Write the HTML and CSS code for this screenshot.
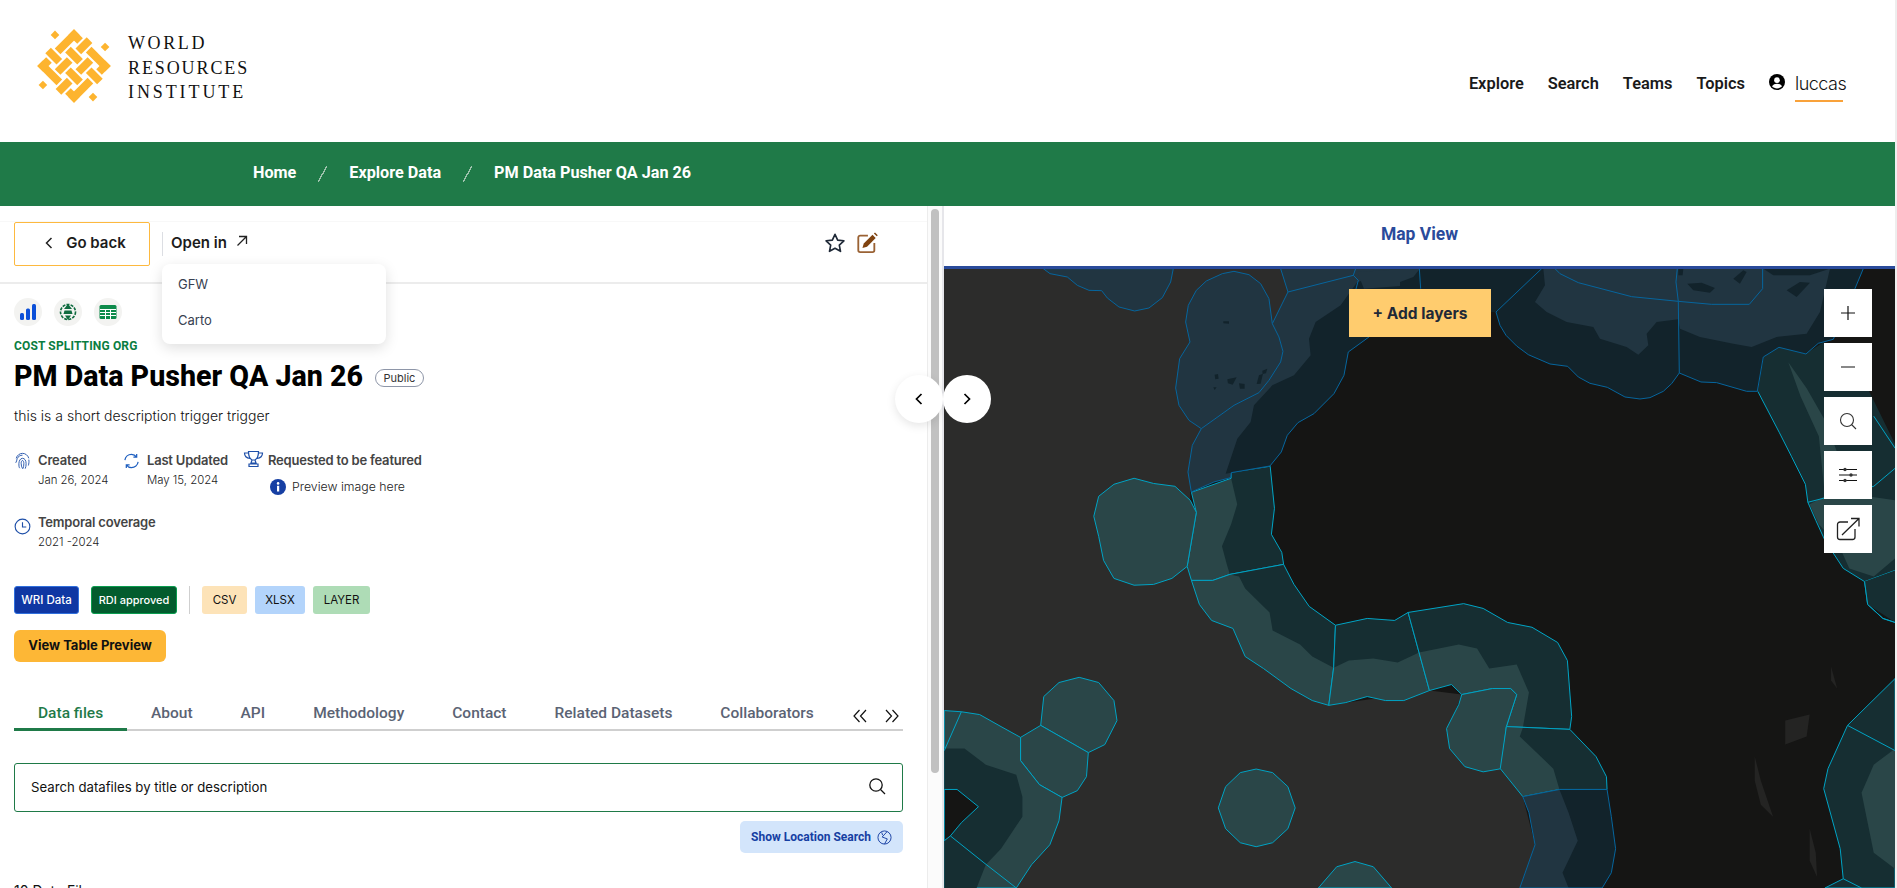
FILE: index.html
```html
<!DOCTYPE html>
<html lang="en">
<head>
<meta charset="utf-8">
<title>PM Data Pusher QA Jan 26</title>
<link rel="stylesheet" href="styles.css">
</head>
<body>
<div class="app">
  <header class="header">
    <a class="brand">
      <svg class="brand-mark" viewBox="-30.300 -30.300 60.600 60.600" aria-hidden="true">
        <g transform="rotate(45)" fill="#fdb42f">
          <rect x="-21.25" y="-21.25" width="10.25" height="6.5"/><rect x="-21.25" y="-21.25" width="6.5" height="22.25"/>
          <rect x="-1" y="-21.25" width="22.25" height="6.5"/><rect x="14.75" y="-21.25" width="6.5" height="10.25"/>
          <rect x="11" y="14.75" width="10.25" height="6.5"/><rect x="14.75" y="-1" width="6.5" height="22.25"/>
          <rect x="-21.25" y="14.75" width="22.25" height="6.5"/><rect x="-21.25" y="11" width="6.5" height="10.25"/>
          <rect x="-13" y="-9.25" width="14" height="6.5"/><rect x="11" y="-9.25" width="13" height="6.5"/>
          <rect x="-24" y="2.75" width="13" height="6.5"/><rect x="-1" y="2.75" width="14" height="6.5"/>
          <rect x="-9.25" y="-24" width="6.5" height="13"/><rect x="-9.25" y="-1" width="6.5" height="14"/>
          <rect x="2.75" y="-13" width="6.5" height="14"/><rect x="2.75" y="11" width="6.5" height="13"/>
          <rect x="-31.5" y="-9.5" width="5" height="5"/><rect x="4.5" y="-31.5" width="5" height="5"/>
          <rect x="-9.5" y="26.5" width="5" height="5"/><rect x="26.5" y="4.5" width="5" height="5"/>
        </g>
      </svg>
      <div class="brand-name"><span>WORLD</span><span class="wide">RESOURCES</span><span class="mid">INSTITUTE</span></div>
    </a>
    <nav class="nav">
      <a>Explore</a><a>Search</a><a>Teams</a><a>Topics</a>
      <div class="user">
        <svg class="user-icon" viewBox="0 0 24 24"><circle cx="12" cy="12" r="12" fill="#000"/><circle cx="12" cy="9.2" r="4.2" fill="#fff"/><path d="M4.5 18.5c1.6-3 4.4-4 7.5-4s5.900 1 7.500 4c-1.900 2-4.500 3.200-7.500 3.200s-5.600-1.200-7.500-3.200z" fill="#fff"/></svg>
        <span class="user-name">luccas</span>
      </div>
    </nav>
  </header>

  <div class="crumbs">
    <a>Home</a><i class="sep"></i><a>Explore Data</a><i class="sep"></i><a>PM Data Pusher QA Jan 26</a>
  </div>

  <main class="split">
    <section class="left">
      <div class="toolbar">
        <button class="back"><svg class="ico10" viewBox="0 0 10 14"><path d="M7.500 2 2.500 7l5 5" fill="none" stroke="#222" stroke-width="1.500"/></svg>Go back</button>
        <i class="tool-sep"></i>
        <div class="open">Open in
          <svg class="ico12" viewBox="0 0 12 12"><path d="M1.500 10.500 10.500 1.500M3 1.500h7.500V9" fill="none" stroke="#222" stroke-width="1.300"/></svg>
        </div>
        <div class="tool-actions">
          <svg class="star" viewBox="0 0 24 24"><path d="M12 2.500l2.900 6.300 6.800.8-5 4.700 1.300 6.800-6-3.400-6 3.400 1.300-6.800-5-4.700 6.800-.8z" fill="none" stroke="#1f2937" stroke-width="1.800" stroke-linejoin="round"/></svg>
          <svg class="edit" viewBox="0 0 24 24"><path d="M13 4H4.500A2 2 0 0 0 2.500 6v14a2 2 0 0 0 2 2H18a2 2 0 0 0 2-2v-8" fill="none" stroke="#9a6234" stroke-width="2"/><path d="M7 17.500l1.500-5L18 3l3.500 3.500-9.500 9.500z" fill="#7f4310"/><path d="M19.500 1.500l1.200-1 3 3-1 1.200z" fill="#7f4310"/></svg>
        </div>
        <div class="menu"><a>GFW</a><a>Carto</a></div>
      </div>

      <div class="content">
        <div class="kinds">
          <span class="kind"><svg viewBox="0 0 18 18"><rect x="1" y="10" width="4" height="7" rx="1.500" fill="#0b4fd8"/><rect x="7" y="5.500" width="4" height="11.500" rx="1.500" fill="#0b4fd8"/><rect x="13" y="1" width="4" height="16" rx="1.500" fill="#0b4fd8"/></svg></span>
          <span class="kind"><svg viewBox="0 0 18 18"><circle cx="9" cy="9" r="7.500" fill="none" stroke="#0f6b3f" stroke-width="1.600" stroke-dasharray="3 1.200"/><path d="M9 1 13 6 5 6zM5.500 7.500h7l1 3.500h-9zM6 12.500h6L9 17z" fill="#0f6b3f"/></svg></span>
          <span class="kind"><svg viewBox="0 0 18 18"><rect x=".5" y="2" width="17" height="14" rx="1.500" fill="#0d8a4a"/><path d="M1 6.500h16M1 9.500h16M1 12.500h16M6.500 6.500V16M11.500 6.500V16" stroke="#fff" stroke-width="1"/></svg></span>
        </div>
        <div class="org">COST SPLITTING ORG</div>
        <div class="title-row"><h1>PM Data Pusher QA Jan 26</h1><span class="pill">Public</span></div>
        <p class="desc">this is a short description trigger trigger</p>

        <div class="meta-row">
          <div class="meta m-created">
            <svg class="meta-ico" viewBox="0 0 18 20" fill="none" stroke="#1e4fa8" stroke-width="1"><path d="M2 7C3 3.500 6 1.500 9 1.500s6 2 7 5.500M1.500 12c1-1 1-3 1.500-4.500C4 5 6.500 3.500 9 3.500M6 18c-1-1-1-3-1-5 0-3 1.500-6 4-6s4 2.500 4 6c0 2-.2 4-1 5.500M9 18.500c-1-2-1.500-3.500-1.500-6 0-1.500.5-3 1.500-3s1.500 1.500 1.500 3.500c0 2-.3 4-1 5.500M15.500 15c.5-2 1-4 .5-6.500"/></svg>
            <div><b>Created</b><span>Jan 26, 2024</span></div>
          </div>
          <div class="meta m-updated">
            <svg class="meta-ico" viewBox="0 0 18 18" fill="none" stroke="#1e5fc0" stroke-width="1.300"><path d="M2 8C2.500 4.500 5.500 2 9 2c2.500 0 4 1 5.500 3M14.500 1.500V5H11M16 10c-.5 3.500-3.500 6-7 6-2.500 0-4-1-5.500-3M3.500 16.500V13H7"/></svg>
            <div><b>Last Updated</b><span>May 15, 2024</span></div>
          </div>
          <div class="meta m-featured">
            <svg class="meta-ico trophy" viewBox="0 0 20 18" fill="none" stroke="#1e4fa8" stroke-width="1.200"><path d="M5 1.500h10c0 4-1 7-3.500 8.500h-3C6 8.500 5 5.500 5 1.500zM5 3H1c0 3 2 5 5.500 5.500M15 3h4c0 3-2 5-5.500 5.500M8.500 10 7.500 13h5l-1-3M5.500 16.500h9V14h-9z"/></svg>
            <div><b>Requested to be featured</b>
              <span class="preview"><svg class="info" viewBox="0 0 16 16"><circle cx="8" cy="8" r="8" fill="#163fa3"/><rect x="7" y="6.800" width="2.200" height="5.700" fill="#fff"/><circle cx="8.100" cy="4.400" r="1.300" fill="#fff"/></svg>Preview image here</span>
            </div>
          </div>
        </div>
        <div class="meta-row second">
          <div class="meta">
            <svg class="meta-ico clock" viewBox="0 0 18 18" fill="none" stroke="#1e4fa8" stroke-width="1.200"><circle cx="9" cy="9" r="7.800"/><path d="M9 4.500V9.500H13"/></svg>
            <div><b>Temporal coverage</b><span>2021 -2024</span></div>
          </div>
        </div>

        <div class="badges">
          <span class="badge wri">WRI Data</span>
          <span class="badge rdi">RDI approved</span>
          <i class="badge-sep"></i>
          <span class="badge csv">CSV</span>
          <span class="badge xlsx">XLSX</span>
          <span class="badge layer">LAYER</span>
        </div>
        <button class="preview-btn">View Table Preview</button>

        <div class="tabs">
          <a class="tab active">Data files</a><a class="tab t-about">About</a><a class="tab">API</a><a class="tab">Methodology</a><a class="tab">Contact</a><a class="tab">Related Datasets</a><a class="tab">Collaborators</a>
          <span class="tab-arrows">
            <svg viewBox="0 0 16 14"><path d="M7.500 1 2 7l5.500 6M14 1 8.500 7l5.500 6" fill="none" stroke="#111" stroke-width="1.200"/></svg>
            <svg viewBox="0 0 16 14"><path d="M2 1l5.500 6L2 13M8.500 1 14 7l-5.500 6" fill="none" stroke="#111" stroke-width="1.200"/></svg>
          </span>
        </div>

        <div class="search">
          <span>Search datafiles by title or description</span>
          <svg class="ico18" viewBox="0 0 18 18"><circle cx="8" cy="8" r="6.200" fill="none" stroke="#111" stroke-width="1.300"/><path d="M12.500 12.500 17 17" stroke="#111" stroke-width="1.300"/></svg>
        </div>
        <div class="loc-row">
          <button class="loc">Show Location Search
            <svg class="ico14" viewBox="0 0 16 16" fill="none" stroke="#163fa3" stroke-width="1"><circle cx="8" cy="8" r="7"/><path d="M10.500 2 5.500 7.500l5.500 2L8 15M5 2.500l1 3"/></svg>
          </button>
        </div>
        <div class="count">10 Data Files</div>
      </div>
    </section>

    <div class="track"><div class="thumb"></div></div>

    <section class="right">
      <div class="map-tab">Map View</div>
      <div class="map">
        <svg class="map-svg" viewBox="944 269 951 619" preserveAspectRatio="none" aria-hidden="true">
          <rect x="944" y="269" width="951" height="619" fill="#151514"/>
          <g transform="translate(940 260) scale(.6103 .4005)">
            <polygon class="land" points="0,0 600,0 600,300 430,420 410,580 412,800 480,920 637,1112 802,1075 855,1085 830,1180 920,1275 955,1340 975,1460 950,1568 0,1568"/>
            <polygon class="lt" points="412,580 477,545 477,530 541,515 548,620 543,685 560,730 563,760 475,785 447,800 412,800 405,765 420,630"/>
            <polygon class="dt" points="477,545 477,530 541,515 548,620 543,685 560,730 563,760 475,785 470,760 462,715 477,660 487,610"/>
            <polygon class="ol t" points="412,580 477,545 477,530 541,515 548,620 543,685 560,730 563,760 475,785 447,800 412,800 405,765 420,630"/>
            <polygon class="lt" points="563,760 580,810 605,865 648,912 645,1018 637,1112 610,1100 575,1070 530,1020 500,990 480,920 445,900 425,860 412,800 447,800 475,785"/>
            <polygon class="dt" points="475,785 563,760 580,810 605,865 648,912 645,1018 610,990 590,960 545,925 540,880 500,820 490,790"/>
            <polygon class="ol t" points="563,760 580,810 605,865 648,912 645,1018 637,1112 610,1100 575,1070 530,1020 500,990 480,920 445,900 425,860 412,800 447,800 475,785"/>
            <polygon class="lt" points="648,912 700,895 745,900 767,880 785,980 802,1075 760,1100 730,1100 700,1090 665,1105 637,1112 645,1018"/>
            <polygon class="dt" points="648,912 700,895 745,900 767,880 785,980 750,1005 710,995 670,1000 645,1018"/>
            <polygon class="ol t" points="648,912 700,895 745,900 767,880 785,980 802,1075 760,1100 730,1100 700,1090 665,1105 637,1112 645,1018"/>
            <polygon class="lt" points="767,880 858,858 890,870 930,905 970,917 1012,955 1028,1000 1035,1140 1032,1172 928,1165 945,1085 935,1070 905,1070 855,1085 838,1060 802,1075"/>
            <polygon class="dt" points="767,880 858,858 890,870 930,905 970,917 1012,955 1028,1000 1035,1140 1032,1172 955,1168 965,1080 945,1010 900,1020 880,970 850,960 785,980"/>
            <polygon class="ol t" points="767,880 858,858 890,870 930,905 970,917 1012,955 1028,1000 1035,1140 1032,1172 928,1165 945,1085 935,1070 905,1070 855,1085 838,1060 802,1075"/>
            <polygon class="lt ol t" points="855,1085 905,1070 935,1070 945,1085 928,1165 920,1270 890,1278 860,1265 835,1220 830,1170 850,1110"/>
            <polygon class="lt" points="928,1165 1032,1172 1075,1240 1092,1290 1093,1322 1015,1322 955,1340 918,1270"/>
            <polygon class="dt" points="955,1168 1032,1172 1075,1240 1092,1290 1093,1322 1015,1322 1005,1270 950,1190"/>
            <polygon class="ol t" points="928,1165 1032,1172 1075,1240 1092,1290 1093,1322 1015,1322 955,1340 918,1270"/>
            <polygon class="db" points="955,1340 1015,1322 1093,1322 1100,1390 1107,1470 1100,1530 1085,1568 950,1568 975,1460 965,1380"/>
            <polygon class="lb" points="955,1340 1015,1322 1030,1380 1045,1450 1020,1530 1030,1568 950,1568 975,1460 965,1380"/>
            <polygon class="ol b" points="955,1340 1015,1322 1093,1322 1100,1390 1107,1470 1100,1530 1085,1568 950,1568 975,1460 965,1380"/>
            <polygon class="lt ol t" points="318,545 350,558 385,565 410,600 420,630 405,765 380,795 350,810 318,812 285,795 268,750 260,690 252,640 260,590 285,560"/>
            <polygon class="lt ol t" points="228,1042 260,1055 285,1100 290,1150 270,1210 243,1230 165,1162 170,1090 195,1055"/>
            <polygon class="lt ol t" points="165,1162 243,1230 240,1290 225,1325 200,1342 163,1310 132,1250 132,1192"/>
            <polygon class="lt ol t" points="518,1271 545,1280 570,1315 582,1368 570,1420 545,1455 518,1465 492,1455 468,1420 456,1368 468,1315 492,1280"/>
            <polygon class="lt ol t" points="620,1568 650,1515 680,1502 710,1515 740,1568"/>
            <polygon class="lt ol t" points="7,1125 35,1128 65,1135 100,1165 132,1192 132,1250 163,1310 200,1342 195,1400 180,1460 150,1510 125,1568 7,1568"/>
            <polygon class="dt" points="7,1220 40,1220 75,1260 125,1285 135,1340 135,1390 100,1470 75,1510 60,1568 7,1568"/>
            <polygon class="ocean ol t" points="7,1322 28,1322 63,1365 35,1405 17,1438 7,1450"/>
            <path class="line t" d="M35 1128 7 1225M17 1438 72 1505 125 1568"/>
            <polygon class="dt" points="1340,328 1350,240 1375,217 1418,235 1448,205 1520,320 1565,460 1565,775 1515,803 1480,770 1450,700 1435,650 1422,605 1418,560 1395,490 1375,430"/>
            <polygon class="lt" points="1390,255 1420,320 1450,400 1480,520 1520,590 1565,600 1565,745 1530,790 1490,770 1475,720 1440,660 1425,610 1450,590 1440,440 1410,340"/>
            <path class="line t" d="M1340 328 1375 430 1395 490 1418 560 1422 605 1435 650 1450 700 1480 770 1515 803 1520 860 1545 895 1565 905M1515 803 1565 775M1422 605 1460 590 1530 565 1565 520M1530 390 1565 470"/>
            <polygon class="dt" points="1515,803 1565,775 1565,905 1520,860"/>
            <path class="line t" d="M1515 803 1520 860 1545 895 1565 905"/>
            <polygon class="dt ol t" points="1565,1045 1487,1162 1455,1270 1448,1320 1475,1470 1480,1545 1450,1568 1565,1568"/>
            <polygon class="lt" points="1565,1220 1530,1260 1510,1330 1530,1480 1565,1520"/>
            <path class="line t" d="M1487 1162 1565 1225M1480 1545 1510 1568"/>
            <polygon class="speck" points="1385,1150 1425,1135 1420,1190 1385,1210"/>
            <polygon class="speck" points="1335,1240 1345,1300 1365,1390 1345,1360 1335,1300"/>
            <polygon class="speck" points="1425,1420 1435,1480 1437,1540 1425,1500"/>
            <polygon class="speck" points="1460,1015 1470,1070 1460,1050"/>
          </g>
          <g transform="translate(944 262) scale(.3333)">
            <polygon class="lb ol b" points="298,20 318,35 370,45 400,70 435,85 473,86 490,108 525,135 572,147 615,138 655,107 680,60 688,20"/>
            <polygon class="lb" points="1010,20 1032,90 985,185 1005,225 1017,268 1010,300 975,355 945,392 870,430 772,500 745,550 732,630 742,690 810,660 860,647 862,632 978,612 1012,570 1030,520 1062,482 1110,455 1170,395 1200,340 1213,270 1275,225 1400,100 1400,20"/>
            <polygon class="db" points="845,635 880,530 920,480 930,430 985,370 1050,340 1100,280 1095,230 1115,180 1190,130 1240,60 1400,20 1400,100 1275,225 1213,270 1200,340 1170,395 1110,455 1062,482 1030,520 1012,570 978,612 862,632"/>
            <polygon class="lb" points="1240,30 1400,20 1400,70 1260,80"/>
            <path class="line b" d="M1010 20 1032 90 985 185M1032 90 1228 40 1235 20M1228 40 1243 55 1235 85 1225 150M772 500 745 550 732 630 742 690 810 660 860 647 862 632 978 612 1012 570 1030 520 1062 482 1110 455 1170 395 1200 340 1213 270 1275 225"/>
            <polygon class="lb ol b" points="870,28 915,38 950,65 975,110 985,185 1005,225 1017,268 1010,300 975,355 945,392 870,430 772,500 735,475 705,430 695,378 707,290 738,240 725,180 733,130 757,85 787,57 835,35"/>
            <g class="hole">
              <polygon points="838,178 855,178 855,185 838,184"/><polygon points="812,338 822,336 824,350 814,352"/><polygon points="850,352 878,346 866,368 852,364"/><polygon points="885,364 902,366 902,380 888,380"/><polygon points="945,340 957,335 950,365 938,366"/><polygon points="955,326 970,320 966,334 956,336"/><polygon points="808,376 818,376 812,384"/>
            </g>
          </g>
          <g transform="translate(1400 262) scale(.3333)">
            <polygon class="db" points="0,20 1390,20 1365,80 1300,232 1255,244 1218,276 1137,256 1090,285 1072,388 1040,388 950,362 903,360 838,333 815,365 790,388 750,407 720,411 675,405 622,376 570,364 535,345 503,313 450,306 385,278 350,252 318,220 300,190 288,150 0,150"/>
            <polygon class="lb" points="430,20 435,70 405,120 440,150 500,180 580,195 600,230 680,255 715,278 745,250 740,215 770,180 835,172 840,200 900,225 1000,245 1055,255 1130,225 1220,215 1260,150 1290,20"/>
            <polygon class="lb" points="0,20 60,20 40,45 0,60"/>
            <g class="hole">
              <polygon points="862,65 905,62 945,78 930,92 880,85"/><polygon points="1160,85 1200,60 1230,62 1190,105"/><polygon points="1000,50 1030,25 1040,30 1020,65"/><polygon points="1090,20 1290,20 1230,40 1120,40"/><polygon points="835,20 850,20 848,40 835,40"/>
            </g>
            <path class="line b" d="M288 150 425 20M288 150 300 190 318 220 350 252 385 278 450 306 503 313 535 345 570 364 622 376 675 405 720 411 750 407 790 388 815 365 838 333 903 360 950 362 1040 388 1072 388M58 20 62 80M465 20 480 35 535 62 695 104 835 118 935 127 1048 127 1088 80 1088 20M832 20 828 60 835 118 838 333M1390 20 1365 80 1300 232 1255 244 1218 276 1137 256 1090 285 1072 388"/>
          </g>
        </svg>

        <button class="add">+ Add layers</button>
        <div class="controls">
          <button class="ctl"><svg viewBox="0 0 16 16"><path d="M8 1v14M1 8h14" stroke="#111" stroke-width="1.200"/></svg></button>
          <button class="ctl"><svg viewBox="0 0 16 16"><path d="M1 8h14" stroke="#555" stroke-width="1.400"/></svg></button>
          <button class="ctl"><svg class="mid-ico" viewBox="0 0 18 18"><circle cx="8" cy="8" r="6.500" fill="none" stroke="#333" stroke-width="1.100"/><path d="M12.500 12.500 17 17" stroke="#333" stroke-width="1.100"/></svg></button>
          <button class="ctl"><svg class="wide-ico" viewBox="0 0 20 16"><path d="M1 2.500h18M1 8h18M1 13.500h18" stroke="#111" stroke-width="1.200"/><circle cx="7" cy="2.500" r="1.700" fill="#333"/><circle cx="13" cy="8" r="1.700" fill="#333"/><circle cx="7" cy="13.500" r="1.700" fill="#333"/></svg></button>
          <button class="ctl"><svg class="big-ico" viewBox="0 0 24 24" fill="none" stroke="#222" stroke-width="1.300"><path d="M12 5H4a2.500 2.500 0 0 0-2.500 2.500V20A2.500 2.500 0 0 0 4 22.500h12.500A2.500 2.500 0 0 0 19 20v-8"/><path d="M6 18 23 1.500M15 1.500h8v8"/></svg></button>
        </div>
      </div>
    </section>

    <button class="round r-left"><svg viewBox="0 0 10 14"><path d="M7.500 2 2.500 7l5 5" fill="none" stroke="#000" stroke-width="1.700"/></svg></button>
    <button class="round r-right"><svg viewBox="0 0 10 14"><path d="M2.500 2l5 5-5 5" fill="none" stroke="#000" stroke-width="1.700"/></svg></button>
  </main>
</div>
</body>
</html>
```

FILE: styles.css
```css
* { box-sizing: border-box; }
html, body { margin: 0; height: 100%; overflow: hidden; background: #fff; }
body { font-family: Inter, "Liberation Sans", sans-serif; color: #111; }
a { display: block; }
button { font: inherit; border: 0; padding: 0; cursor: pointer; }
svg { display: block; flex: none; }

.app { width: 1895px; height: 888px; display: flex; flex-direction: column; box-shadow: 2px 0 0 #eeeeee; }

/* header */
.header { height: 142px; flex: none; display: flex; align-items: flex-start; justify-content: space-between; padding: 29px 52px 0 37px; }
.brand { display: flex; align-items: flex-start; }
.brand-mark { width: 74px; height: 74px; }
.brand-name { margin: 2px 0 0 17px; display: flex; flex-direction: column; font: 400 18px/24.6px "Liberation Serif", serif; color: #111; letter-spacing: 2.6px; }
.brand-name .wide { letter-spacing: 1.9px; }
.brand-name .mid { letter-spacing: 2.900px; }
.nav { display: flex; align-items: center; margin-top: 42px; font: 600 16.400px/24px Roboto, sans-serif; color: #1a1a1a; }
.nav a { margin-right: 24px; margin-bottom: 6px; }
.user { display: flex; align-items: flex-start; }
.user-icon { width: 16px; height: 16px; margin: 3px 10px 0 0; }
.user-name { font: 300 18px/24px Inter, sans-serif; color: #111; width: 48px; height: 31px; border-bottom: 2px solid #f9a23a; letter-spacing: -.5px; padding-top: 1px; }

/* breadcrumb */
.crumbs { height: 64px; flex: none; background: #1f7a48; display: flex; align-items: center; padding: 0 0 2px 253px; color: #fff; font: 700 16.200px/20px Roboto, sans-serif; }
.sep { width: 9px; height: 16px; margin: 2px 22px 0; background: linear-gradient(to bottom right, transparent 46%, #9fc3ae 46%, #9fc3ae 54%, transparent 54%); }

/* split */
.split { flex: 1; min-height: 0; display: flex; position: relative; }
.left { width: 927px; flex: none; overflow: hidden; }
.track { width: 17px; flex: none; background: #fbfbfb; border-left: 1px solid #ececec; border-right: 2px solid #e6e6ea; padding: 3px 3px 0; }
.thumb { width: 8px; height: 564px; background: #c1c1c1; border-radius: 4px; }
.right { flex: 1; min-width: 0; display: flex; flex-direction: column; }

/* toolbar */
.toolbar { position: relative; height: 78px; padding: 16px 14px 0; display: flex; align-items: flex-start; border-bottom: 2px solid #ececec; background: linear-gradient(#fff 15px, #f8f8f8 15px, #f8f8f8 16px, #fff 16px); }
.back { width: 136px; height: 44px; background: #fff; border: 1px solid #fdb93f; border-radius: 2px; display: flex; align-items: center; justify-content: center; gap: 12px; padding: 0 0 3px 6px; font-weight: 600; font-size: 15px; color: #1c1c1c; }
.ico10 { width: 10px; height: 14px; }
.tool-sep { width: 1px; height: 24px; margin: 10px 8px 0 12px; background: #dcdee3; }
.open { display: flex; align-items: center; gap: 9px; height: 40px; font-weight: 600; font-size: 15px; color: #1c1c1c; }
.ico12 { width: 12px; height: 12px; margin-top: -2px; }
.tool-actions { display: flex; gap: 10px; align-items: center; margin: 10px 0 0 auto; padding-right: 35px; }
.star { width: 22px; height: 22px; }
.edit { width: 22px; height: 22px; }
.menu { position: absolute; left: 162px; top: 58px; width: 224px; height: 80px; background: #fff; border-radius: 8px; box-shadow: 0 4px 14px rgba(0,0,0,.13); z-index: 4; font-size: 13px; color: #374151; padding: 2px 16px; }
.menu a { line-height: 36px; }

/* content */
.content { padding: 14px 24px 0 14px; }
.kinds { display: flex; gap: 12px; }
.kind { width: 28px; height: 28px; border-radius: 50%; background: #f3f3f1; display: flex; align-items: center; justify-content: center; }
.kind svg { width: 18px; height: 18px; }
.org { margin-top: 11px; font: 700 12px/18px Roboto, sans-serif; letter-spacing: .15px; color: #0a7d41; }
.title-row { display: flex; align-items: center; height: 40px; margin-top: 1px; }
h1 { margin: 0; font: 800 28.600px/40px Roboto, sans-serif; color: #000; }
.pill { margin: 3px 0 0 12px; width: 49px; height: 18px; border: 1px solid #8e96a8; border-radius: 9px; font-size: 11px; line-height: 16px; text-align: center; color: #333; }
.desc { margin: 8px 0 0; font-size: 14px; line-height: 24px; font-weight: 300; color: #111; }

.meta-row { display: flex; margin-top: 22px; }
.meta-row.second { margin-top: 15px; }
.meta { display: flex; gap: 7px; font-size: 13px; line-height: 20px; }
.meta b { display: block; font-weight: 600; color: #444; font-size: 13px; letter-spacing: -.2px; }
.meta span { display: block; font-weight: 300; color: #222; font-size: 11.400px; }
.meta-ico { width: 17px; height: 18px; margin-top: 2px; }
.trophy { width: 21px; margin-right: -3px; }
.clock { width: 17px; height: 17px; margin-top: 6px; }
.m-created { width: 109px; }
.m-updated { width: 120px; }
.m-featured .meta-ico { margin-top: 0; }
.meta span.preview { display: flex; align-items: center; gap: 6px; margin: 7px 0 0 2px; font-size: 12.300px; }
.info { width: 16px; height: 16px; }

.badges { display: flex; align-items: stretch; height: 28px; margin-top: 34px; font-size: 11.500px; }
.badge { display: flex; align-items: center; justify-content: center; border-radius: 3px; color: #111; }
.wri { width: 65px; background: #0f37a3; border: 1px solid #2f6fdc; color: #fff; font-weight: 500; margin-right: 12px; }
.rdi { width: 86px; background: #035c2e; border: 1px solid #0a9d4f; color: #fff; font-weight: 500; font-size: 11px; margin-right: 12px; }
.badge-sep { width: 1px; background: #cfcfcf; margin-right: 12px; }
.csv { width: 45px; background: #fde3b8; margin-right: 8px; }
.xlsx { width: 50px; background: #b3d4fb; margin-right: 8px; }
.layer { width: 57px; background: #aedcb6; }
.preview-btn { display: block; margin-top: 16px; width: 152px; height: 32px; padding-bottom: 2px; border-radius: 6px; background: #fdb736; font-weight: 700; font-size: 13px; color: #111; }

.tabs { display: flex; align-items: flex-start; gap: 48px; height: 34px; margin-top: 35px; border-bottom: 2px solid #cfcfcf; font: 500 15.500px/27px Roboto, sans-serif; color: #5b6374; position: relative; }
.tab { height: 34px; padding-top: 3px; flex: none; }
.tab.active { width: 113px; padding-left: 24px; color: #1f7a48; border-bottom: 3px solid #1f7a48; }
.tab.t-about { margin-left: -24px; }
.tab-arrows { position: absolute; right: 3px; top: 12px; display: flex; gap: 16px; }
.tab-arrows svg { width: 16px; height: 14px; }

.search { margin-top: 32px; height: 49px; border: 1px solid #1f7a48; border-radius: 3px; display: flex; align-items: center; justify-content: space-between; padding: 0 16px 2px; font-size: 13.200px; font-weight: 400; color: #111; }
.ico18 { width: 18px; height: 18px; margin-top: -2px; }
.loc-row { display: flex; justify-content: flex-end; margin-top: 9px; }
.loc { width: 163px; height: 32px; background: #d3e5fb; border-radius: 5px; display: flex; align-items: center; justify-content: center; gap: 6px; font: 700 12px Roboto, sans-serif; color: #163fa3; }
.ico14 { width: 15px; height: 15px; }
.count { margin-top: 28px; font-size: 14px; line-height: 20px; color: #111; }

/* map */
.map-tab { height: 63px; flex: none; display: flex; align-items: center; justify-content: center; padding-bottom: 5px; border-bottom: 3px solid #2a4b9b; font: 700 17.500px/24px Roboto, sans-serif; color: #2a4b9b; }
.map { flex: 1; min-height: 0; position: relative; }
.map-svg { width: 100%; height: 100%; }
.land { fill: #2c2c2b; }
.lt { fill: #2a4648; }
.dt { fill: #162e32; }
.lb { fill: #213541; }
.db { fill: #12232b; }
.ocean { fill: #151514; }
.speck { fill: #242423; }
.hole polygon { fill: #12232b; }
.ol, .line { stroke-width: 1; vector-effect: non-scaling-stroke; }
.line { fill: none; }
.ol.t, .line.t { stroke: #00a3c4; }
.ol.b, .line.b { stroke: #06659d; }
.ol:not(.lt):not(.lb):not(.dt):not(.ocean) { fill: none; }
.add { position: absolute; left: 405px; top: 20px; width: 142px; height: 48px; background: #ffcc6e; font-weight: 700; font-size: 15.500px; color: #1f2937; }
.controls { position: absolute; left: 880px; top: 20px; display: flex; flex-direction: column; gap: 6px; }
.ctl { width: 48px; height: 48px; background: #fff; display: flex; align-items: center; justify-content: center; }
.ctl svg { width: 16px; height: 16px; }
.ctl .mid-ico { width: 18px; height: 18px; }
.ctl .wide-ico { width: 20px; height: 16px; }
.ctl .big-ico { width: 24px; height: 24px; }

.round { position: absolute; top: 169px; width: 48px; height: 48px; border-radius: 50%; background: #fff; display: flex; align-items: center; justify-content: center; }
.round svg { width: 10px; height: 14px; }
.r-left { left: 895px; box-shadow: 0 3px 10px rgba(0,0,0,.1); }
.r-right { left: 943px; }
```
